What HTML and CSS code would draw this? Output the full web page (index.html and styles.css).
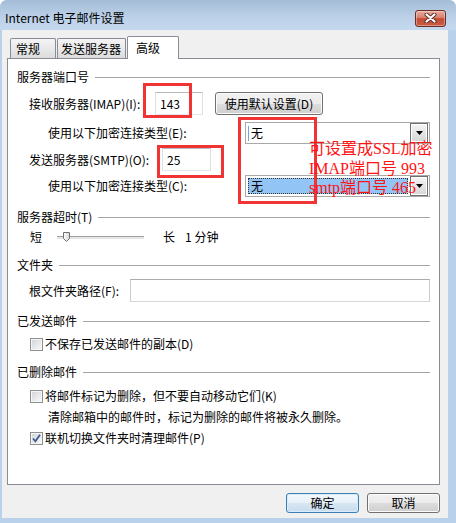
FILE: index.html
```html
<!DOCTYPE html>
<html lang="zh-CN">
<head>
<meta charset="utf-8">
<title>Internet 电子邮件设置</title>
<link rel="stylesheet" href="styles.css">
</head>
<body>
<div class="window">
  <div class="titlebar">
    <span class="title">Internet 电子邮件设置</span>
    <div class="close">
      <svg width="13" height="10" viewBox="0 0 13 10"><path d="M2.5 1.5 L10.5 8.5 M10.5 1.5 L2.5 8.5" stroke="#5a2a24" stroke-width="4" stroke-linecap="round"/><path d="M2.5 1.5 L10.5 8.5 M10.5 1.5 L2.5 8.5" stroke="#fff" stroke-width="2.2" stroke-linecap="round"/></svg>
    </div>
  </div>
  <div class="client">
    <div class="tabs">
      <div class="tab t1">常规</div>
      <div class="tab t2">发送服务器</div>
      <div class="tab active">高级</div>
    </div>
    <div class="panel">
      <div class="heading"><span>服务器端口号</span><i class="rule"></i></div>
      <div class="row r-imap">
        <span class="lbl w-imap">接收服务器(IMAP)(I):</span>
        <div class="input port">143</div>
        <div class="btn btn-default-set">使用默认设置(D)</div>
      </div>
      <div class="row r-enc1">
        <span class="lbl">使用以下加密连接类型(E):</span>
        <div class="combo"><i class="caret"></i><span class="val">无</span><div class="drop"><svg width="7" height="4" viewBox="0 0 7 4"><path d="M0 0 H7 L3.5 4 Z" fill="#000"/></svg></div></div>
      </div>
      <div class="row r-smtp">
        <span class="lbl w-smtp">发送服务器(SMTP)(O):</span>
        <div class="input port port2">25</div>
      </div>
      <div class="row r-enc2">
        <span class="lbl">使用以下加密连接类型(C):</span>
        <div class="combo"><div class="sel">无</div><div class="drop"><svg width="7" height="4" viewBox="0 0 7 4"><path d="M0 0 H7 L3.5 4 Z" fill="#000"/></svg></div></div>
      </div>
      <div class="heading h2"><span>服务器超时(T)</span><i class="rule"></i></div>
      <div class="row r-slider">
        <span>短</span>
        <div class="track"><svg class="thumb" width="7" height="10" viewBox="0 0 7 10"><defs><linearGradient id="tg" x1="0" y1="0" x2="1" y2="0"><stop offset="0" stop-color="#fdfdfd"/><stop offset="1" stop-color="#d6d6d6"/></linearGradient></defs><path d="M0.5 0.5 H6.5 V6.5 L3.5 9.5 L0.5 6.5 Z" fill="url(#tg)" stroke="#707070"/></svg></div>
        <span class="long">长</span>
        <span class="dur">1 分钟</span>
      </div>
      <div class="heading h3"><span>文件夹</span><i class="rule"></i></div>
      <div class="row r-root">
        <span class="lbl w-root">根文件夹路径(F):</span>
        <div class="input wide"></div>
      </div>
      <div class="heading h4"><span>已发送邮件</span><i class="rule"></i></div>
      <div class="row cb-row r-sent">
        <span class="cb"></span><span class="cb-lbl">不保存已发送邮件的副本(D)</span>
      </div>
      <div class="heading h5"><span>已删除邮件</span><i class="rule"></i></div>
      <div class="row cb-row r-del1">
        <span class="cb"></span><span class="cb-lbl">将邮件标记为删除，但不要自动移动它们(K)</span>
      </div>
      <div class="row r-note">清除邮箱中的邮件时，标记为删除的邮件将被永久删除。</div>
      <div class="row cb-row r-del2">
        <span class="cb checked"><svg width="11" height="11" viewBox="0 0 11 11"><path d="M2 5.5 L4.4 8.3 L9 1.8" fill="none" stroke="#3d5a96" stroke-width="1.8"/></svg></span><span class="cb-lbl">联机切换文件夹时清理邮件(P)</span>
      </div>
    </div>
    <div class="buttons">
      <div class="btn dlg default">确定</div>
      <div class="btn dlg">取消</div>
    </div>
  </div>

  <div class="mark mk1"></div>
  <div class="mark mk2"></div>
  <div class="mark mk3"></div>
  <div class="note-red">可设置成SSL加密<br>IMAP端口号 993<br>smtp端口号 465</div>
</div>
</body>
</html>
```
FILE: styles.css
```css
* { box-sizing: border-box; }
html, body { margin: 0; padding: 0; }
body {
  background: #fff;
  font-family: "Noto Sans CJK SC", "Noto Sans", sans-serif;
  font-size: 12px;
  color: #000;
}

.window {
  position: relative;
  width: 456px;
  height: 523px;
  background: #b9d1ea;
  border-radius: 7px 7px 0 0;
  display: flex;
  flex-direction: column;
  overflow: hidden;
}

.titlebar {
  height: 30px;
  flex: none;
  display: flex;
  align-items: center;
  padding: 6px 10px 0 5px;
  background: linear-gradient(#a3bcd7, #bdd2e9 60%, #c4d8ee);
}
.title { color: #000; line-height: 16px; }
.close {
  margin-left: auto;
  width: 31px;
  height: 17px;
  border: 1px solid #6d2d25;
  border-radius: 3px;
  background: linear-gradient(#e8aa9d 0%, #d98572 42%, #c44a34 52%, #c95c43 100%);
  box-shadow: inset 0 0 0 1px rgba(255,255,255,0.35);
  display: flex;
  align-items: center;
  justify-content: center;
}

.client {
  flex: 1;
  margin: 0 8px 5px 2px;
  background: #f0f0f0;
  padding: 6px 8px 5px 5px;
  display: flex;
  flex-direction: column;
}

.tabs {
  display: flex;
  align-items: flex-end;
  height: 22px;
  padding-left: 3px;
  position: relative;
  z-index: 1;
}
.tab {
  height: 20px;
  border: 1px solid #898c95;
  border-bottom: none;
  border-radius: 2px 2px 0 0;
  background: linear-gradient(#f4f4f4, #e9e9e9 50%, #dcdcdc);
  display: flex;
  align-items: center;
  line-height: 16px;
}
.t1 { width: 46px; padding-left: 5px; }
.t2 { width: 69px; padding-left: 3px; margin-left: 1px; }
.active {
  width: 52px;
  height: 23px;
  margin-left: 1px;
  margin-bottom: -1px;
  padding-left: 8px;
  padding-bottom: 1px;
  background: #fff;
}

.panel {
  height: 427px;
  flex: none;
  background: #fff;
  border: 1px solid #898c95;
  padding: 10px 9px 0 9px;
}

.heading {
  display: flex;
  align-items: center;
  height: 16px;
  line-height: 16px;
}
.heading .rule {
  flex: 1;
  height: 1px;
  background: #a5a5a5;
  margin-left: 6px;
}
.h2 { margin-top: 12px; }
.h3 { margin-top: 12px; }
.h4 { margin-top: 11px; }
.h5 { margin-top: 12px; }

.row {
  display: flex;
  align-items: center;
  line-height: 16px;
}
.r-imap { margin-top: 7px; height: 23px; padding-left: 12px; }
.r-enc1 { margin-top: 7px; height: 22px; padding-left: 31px; }
.r-smtp { margin-top: 4px; height: 23px; padding-left: 12px; }
.r-enc2 { margin-top: 4px; height: 22px; padding-left: 31px; }
.r-slider { margin-top: 4px; height: 16px; padding-left: 13px; }
.r-root { margin-top: 6px; height: 23px; padding-left: 12px; }
.r-sent { margin-top: 7px; }
.r-del1 { margin-top: 8px; }
.r-note { margin-top: 5px; height: 16px; padding-left: 31px; }
.r-del2 { margin-top: 5px; }

.lbl { flex: none; white-space: nowrap; }
.w-imap { width: 126px; }
.w-smtp { width: 133px; }
.w-root { width: 101px; }

.input {
  height: 23px;
  background: #fff;
  border: 1px solid;
  border-color: #b9bbc1 #dde0e5 #e3e7ec #dde0e5;
  display: flex;
  align-items: center;
  padding-left: 4px;
}
.port { width: 48px; }
.port2 { width: 49px; }
.wide { flex: 1; border-color: #a9abb0 #c9ccd1 #d4d7dc #c9ccd1; }

.btn {
  border: 1px solid #707070;
  border-radius: 3px;
  background: linear-gradient(#f2f2f2 0%, #ebebeb 50%, #dddddd 51%, #cfcfcf 100%);
  box-shadow: inset 0 0 0 1px #fbfbfb;
  display: flex;
  align-items: center;
  justify-content: center;
  line-height: 16px;
}
.btn-default-set {
  margin-left: 12px;
  width: 108px;
  height: 23px;
}

.combo {
  margin-left: auto;
  width: 185px;
  height: 22px;
  border: 1px solid #a9a9a9;
  background: #fff;
  display: flex;
  align-items: center;
  padding: 0 1px 0 2px;
}
.caret {
  width: 1px;
  height: 15px;
  background: #6ea6e0;
  margin-right: 1px;
}
.val { padding-left: 1px; }
.sel {
  flex: 1;
  height: 16px;
  margin-right: 2px;
  background: #92c4f6;
  outline: 1px dotted #333;
  outline-offset: -1px;
  padding-left: 3px;
  display: flex;
  align-items: center;
}
.drop {
  margin-left: auto;
  width: 18px;
  height: 20px;
  border: 1px solid #6f6f6f;
  background: linear-gradient(#f6f6f6, #e4e4e4 50%, #d6d6d6);
  box-shadow: inset 0 0 0 1px #fff;
  display: flex;
  align-items: center;
  justify-content: center;
}

.track {
  position: relative;
  width: 87px;
  height: 3px;
  margin-left: 15px;
  border-top: 1px solid #a0a0a0;
  border-bottom: 1px solid #e3e3e3;
  background: #e9e9e9;
}
.thumb { position: absolute; left: 6px; top: -5px; }
.long { margin-left: 19px; }
.dur { margin-left: 10px; }

.cb-row { height: 16px; padding-left: 13px; }
.cb {
  flex: none;
  width: 13px;
  height: 13px;
  border: 1px solid #8e8f8f;
  background: linear-gradient(135deg, #cfd2d7, #f2f3f4 80%, #fbfbfb);
  box-shadow: inset 0 0 0 1px #f6f6f6;
  display: flex;
  align-items: center;
  justify-content: center;
}
.cb-lbl { margin-left: 2px; white-space: nowrap; }

.buttons {
  margin-top: 8px;
  display: flex;
  justify-content: flex-end;
  gap: 8px;
}
.dlg { width: 73px; height: 20px; }
.default {
  border-color: #3c7fb1;
  background: linear-gradient(#f3f8fc 0%, #e6f0f8 50%, #d6e6f3 51%, #c9dded 100%);
  box-shadow: inset 0 0 0 1px #d8ecfb;
}

.mark {
  position: absolute;
  border: 3px solid #f03434;
}
.mk1 { left: 143px; top: 83px; width: 49px; height: 35px; }
.mk2 { left: 238px; top: 117px; width: 79px; height: 87px; }
.mk3 { left: 157px; top: 145px; width: 67px; height: 33px; }

.note-red {
  position: absolute;
  left: 309px;
  top: 139px;
  font-family: "Liberation Serif", "Noto Sans CJK SC", serif;
  font-size: 16px;
  line-height: 19.5px;
  color: #ff1414;
  white-space: nowrap;
}
```
